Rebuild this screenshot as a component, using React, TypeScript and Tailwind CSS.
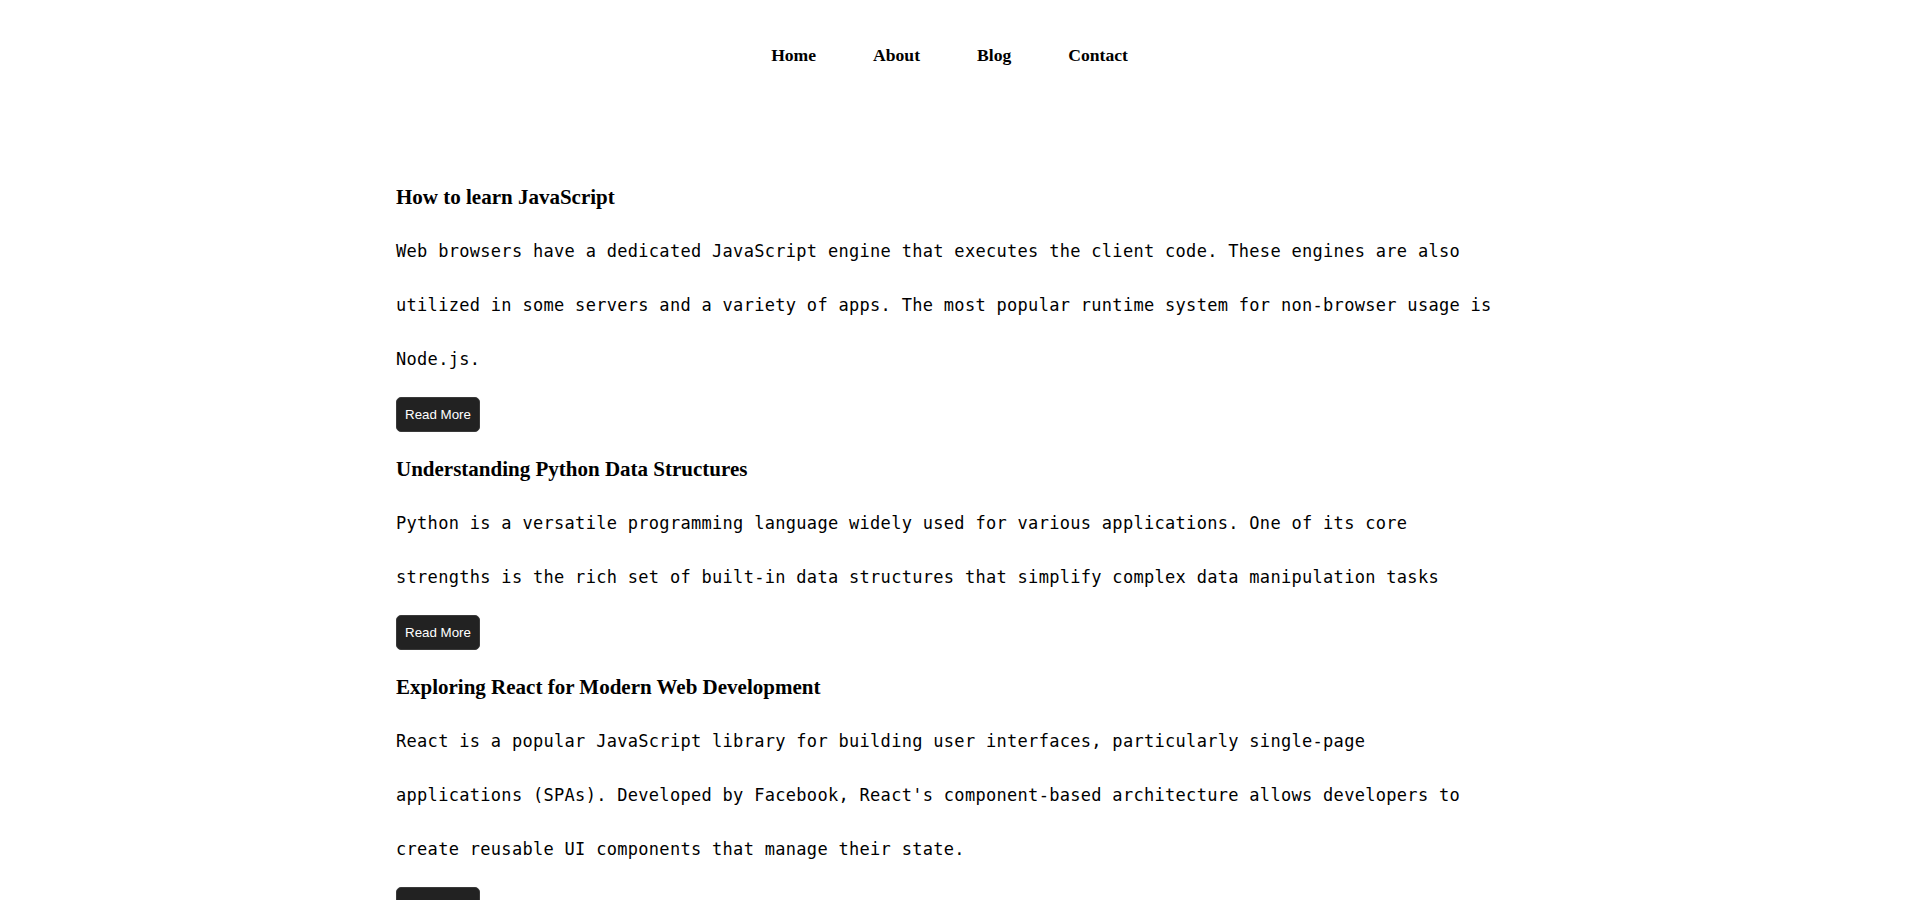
import React from 'react';

const navLinks = ['Home', 'About', 'Blog', 'Contact'];

// Blog posts
const posts = [
  {
    id: 1,
    title: 'How to learn JavaScript',
    body: 'Web browsers have a dedicated JavaScript engine that executes the client code. These engines are also utilized in some servers and a variety of apps. The most popular runtime system for non-browser usage is Node.js.',
  },
  {
    id: 2,
    title: 'Understanding Python Data Structures',
    body: 'Python is a versatile programming language widely used for various applications. One of its core strengths is the rich set of built-in data structures that simplify complex data manipulation tasks',
  },
  {
    id: 3,
    title: 'Exploring React for Modern Web Development',
    body: "React is a popular JavaScript library for building user interfaces, particularly single-page applications (SPAs). Developed by Facebook, React's component-based architecture allows developers to create reusable UI components that manage their state.",
  },
  {
    id: 4,
    title: 'Getting Started with CSS Grid',
    body: 'CSS Grid Layout is a two-dimensional layout system for the web. It lets you lay content out in rows and columns, and has many features that make building complex layouts straightforward.',
  },
  {
    id: 5,
    title: 'An Introduction to TypeScript',
    body: 'TypeScript is a strongly typed programming language that builds on JavaScript, giving you better tooling at any scale. Types catch errors early and make large codebases easier to maintain.',
  },
  {
    id: 6,
    title: 'Working with REST APIs',
    body: 'REST is an architectural style for designing networked applications. It relies on a stateless, client-server communication protocol, and is the most common way web services expose their data.',
  },
  {
    id: 7,
    title: 'Version Control with Git',
    body: 'Git is a distributed version control system that tracks changes in any set of computer files, usually used for coordinating work among programmers who are collaboratively developing source code.',
  },
  {
    id: 8,
    title: 'Databases for Beginners',
    body: 'A database is an organized collection of data stored and accessed electronically. Relational databases store data in tables, while NoSQL databases offer flexible schemas for unstructured data.',
  },
  {
    id: 9,
    title: 'Writing Clean Code',
    body: 'Clean code is code that is easy to read, understand and change. Meaningful names, small functions and consistent formatting go a long way toward keeping a project healthy over time.',
  },
];

function Post({ title, body, first }: { title: string; body: string; first: boolean }) {
  return (
    <article className={first ? '' : 'mt-[25px]'}>
      <h3 className="text-[21px] leading-[24px] font-bold text-black font-['Liberation_Serif',serif]">
        {title}
      </h3>
      <p className="mt-[15px] text-[17px] leading-[54px] tracking-[0.3px] text-black font-['DejaVu_Sans_Mono',monospace]">
        {body}
      </p>
      <button className="mt-[11px] block rounded-[5px] border border-[#3a3a3a] bg-[#222222] px-[8px] py-[9px] text-[13.33px] leading-[15px] text-white font-['Liberation_Sans',sans-serif]">
        Read More
      </button>
    </article>
  );
}

export default function App() {
  return (
    <div className="min-h-screen bg-white">
      <nav className="pt-[43px]">
        <ul className="flex justify-center gap-[57px] pr-[20px]">
          {navLinks.map((link) => (
            <li key={link}>
              <a href="#" className="text-[17.6px] leading-[20px] font-bold text-black font-['Liberation_Serif',serif]">
                {link}
              </a>
            </li>
          ))}
        </ul>
      </nav>
      <main className="ml-[396px] mt-[118px] w-[1100px] pb-[60px]">
        {posts.map((post, i) => (
          <Post key={post.id} title={post.title} body={post.body} first={i === 0} />
        ))}
      </main>
    </div>
  );
}
